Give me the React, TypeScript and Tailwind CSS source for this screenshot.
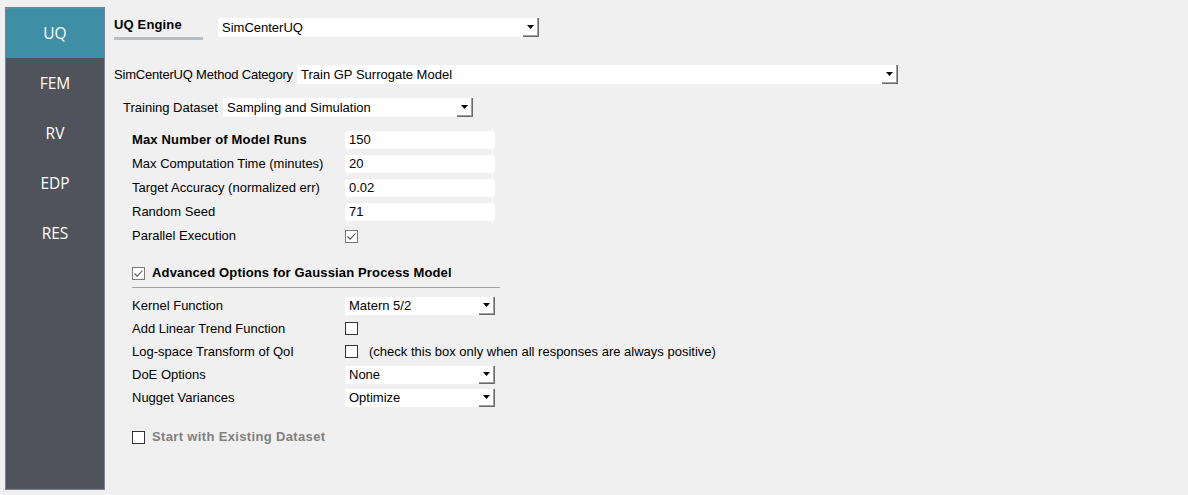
import React from "react";

const FONT = { fontFamily: '"Liberation Sans", Arial, sans-serif' };

function Arrow() {
  return (
    <svg width="7" height="4" viewBox="0 0 7 4" className="block">
      <polygon points="0,0 7,0 3.5,4" fill="#000" />
    </svg>
  );
}

function Combo({ value, w, h = 19 }: { value: string; w: number; h?: number }) {
  return (
    <div
      className="flex bg-white text-[13px] text-black shrink-0"
      style={{ width: w, height: h }}
    >
      <div className="flex-1 flex items-center pl-[4px] whitespace-nowrap overflow-hidden">{value}</div>
      <div className="w-[16px] h-full flex items-center justify-center border-r border-b border-[#696969] shadow-[inset_-1px_-1px_0_#a0a0a0]">
        <Arrow />
      </div>
    </div>
  );
}

function Input({ value }: { value: string }) {
  return (
    <div className="w-[150px] h-[18px] bg-white rounded-[4px] flex items-center pl-[4px] text-[13px] text-black">
      {value}
    </div>
  );
}

function Check({ checked }: { checked?: boolean }) {
  return (
    <div
      className={
        "w-[13px] h-[13px] bg-white border flex items-center justify-center shrink-0 " +
        (checked ? "border-[#7a7a7a]" : "border-[#333333]")
      }
    >
      {checked && (
        <svg width="11" height="11" viewBox="0 0 11 11">
          <polyline points="1.5,5.5 4.2,8.2 9.5,2.5" fill="none" stroke="#555" strokeWidth="1.1" />
        </svg>
      )}
    </div>
  );
}

function Row({ label, children, bold, h = 24 }: { label: string; children: React.ReactNode; bold?: boolean; h?: number }) {
  return (
    <div className="flex items-center" style={{ height: h }}>
      <div className={"w-[213px] whitespace-nowrap text-[13px] text-black " + (bold ? "font-bold tracking-[0.15px]" : "")}>{label}</div>
      {children}
    </div>
  );
}

export default function App() {
  const items = ["UQ", "FEM", "RV", "EDP", "RES"];
  return (
    <div className="w-[1188px] h-[495px] bg-[#f0f0f0] flex overflow-hidden" style={FONT}>
      <div className="ml-[5px] mt-[7px] w-[100px] h-[483px] border border-[#7d8089] bg-[#50535b] flex flex-col shrink-0">
        {items.map((it, i) => (
          <div
            key={it}
            className={
              "h-[50px] flex items-center justify-center text-white text-[15.5px] " +
              (i === 0 ? "bg-[#3e8fa5] border-t border-dotted border-[#c0706a]" : "")
            }
            style={{ fontFamily: '"Open Sans", "Noto Sans", sans-serif' }}
          >
            <span className="mt-[1px]">{it}</span>
          </div>
        ))}
      </div>

      <div className="ml-[9px] flex flex-col">
        {/* UQ Engine */}
        <div className="mt-[15px] flex items-start">
          <div className="w-[89px] flex flex-col">
            <div className="h-[20px] leading-[20px] text-[13px] font-bold tracking-[0.15px] text-black whitespace-nowrap">UQ Engine</div>
            <div className="mt-[2px] h-[3px] bg-[#b4bec6]" />
          </div>
          <div className="ml-[15px] mt-[3px]">
            <Combo value="SimCenterUQ" w={321} />
          </div>
        </div>

        {/* Method Category */}
        <div className="mt-[25px] h-[19px] flex items-center">
          <div className="w-[183px] text-[13px] tracking-[-0.2px] text-black whitespace-nowrap">SimCenterUQ Method Category</div>
          <Combo value="Train GP Surrogate Model" w={601} />
        </div>

        {/* Training Dataset */}
        <div className="mt-[14px] h-[19px] flex items-center pl-[9px]">
          <div className="w-[100px] text-[13px] text-black whitespace-nowrap">Training Dataset</div>
          <Combo value="Sampling and Simulation" w={250} />
        </div>

        <div className="mt-[11px] pl-[18px] flex flex-col">
          <Row label="Max Number of Model Runs" bold>
            <Input value="150" />
          </Row>
          <Row label="Max Computation Time (minutes)">
            <Input value="20" />
          </Row>
          <Row label="Target Accuracy (normalized err)">
            <Input value="0.02" />
          </Row>
          <Row label="Random Seed">
            <Input value="71" />
          </Row>
          <Row label="Parallel Execution">
            <Check checked />
          </Row>

          <div className="mt-[13px] h-[24px] flex items-center">
            <Check checked />
            <div className="ml-[7px] text-[13px] font-bold tracking-[0.15px] text-black whitespace-nowrap">
              Advanced Options for Gaussian Process Model
            </div>
          </div>
          <div className="mt-[2px] w-[368px] h-px bg-[#a0a0a0]" />

          <div className="mt-[6px] flex flex-col">
            <Row label="Kernel Function" h={23}>
              <Combo value="Matern 5/2" w={150} h={18} />
            </Row>
            <Row label="Add Linear Trend Function" h={23}>
              <Check />
            </Row>
            <Row label="Log-space Transform of QoI" h={23}>
              <Check />
              <div className="ml-[11px] text-[13px] text-black whitespace-nowrap">
                (check this box only when all responses are always positive)
              </div>
            </Row>
            <Row label="DoE Options" h={23}>
              <Combo value="None" w={150} h={18} />
            </Row>
            <Row label="Nugget Variances" h={23}>
              <Combo value="Optimize" w={150} h={18} />
            </Row>
          </div>

          <div className="mt-[16px] h-[24px] flex items-center">
            <Check />
            <div className="ml-[7px] text-[13px] font-bold tracking-[0.35px] text-[#808080] whitespace-nowrap">
              Start with Existing Dataset
            </div>
          </div>
        </div>
      </div>
    </div>
  );
}
